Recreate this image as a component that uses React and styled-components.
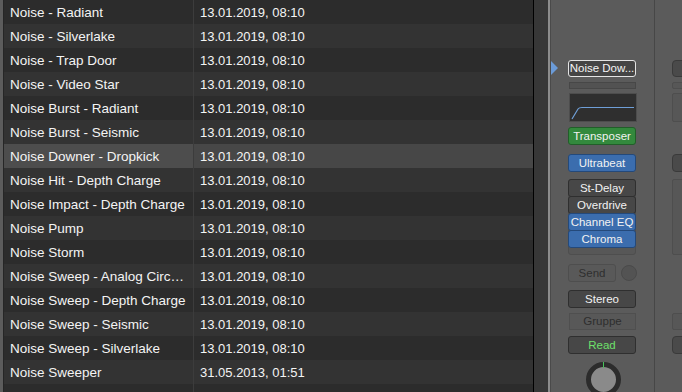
import React from "react";
import styled, { createGlobalStyle } from "styled-components";

const patches = [
  ["Noise - Radiant", "13.01.2019, 08:10"],
  ["Noise - Silverlake", "13.01.2019, 08:10"],
  ["Noise - Trap Door", "13.01.2019, 08:10"],
  ["Noise - Video Star", "13.01.2019, 08:10"],
  ["Noise Burst - Radiant", "13.01.2019, 08:10"],
  ["Noise Burst - Seismic", "13.01.2019, 08:10"],
  ["Noise Downer - Dropkick", "13.01.2019, 08:10"],
  ["Noise Hit - Depth Charge", "13.01.2019, 08:10"],
  ["Noise Impact - Depth Charge", "13.01.2019, 08:10"],
  ["Noise Pump", "13.01.2019, 08:10"],
  ["Noise Storm", "13.01.2019, 08:10"],
  ["Noise Sweep - Analog Circuits", "13.01.2019, 08:10"],
  ["Noise Sweep - Depth Charge", "13.01.2019, 08:10"],
  ["Noise Sweep - Seismic", "13.01.2019, 08:10"],
  ["Noise Sweep - Silverlake", "13.01.2019, 08:10"],
  ["Noise Sweeper", "31.05.2013, 01:51"],
  ["", ""],
];

const SELECTED = 6;

function PatchList() {
  return (
    <Style.List>
      {patches.map(([name, date], i) => (
        <Style.Row key={i} odd={i % 2 === 1} selected={i === SELECTED}>
          <Style.NameCell selected={i === SELECTED}>{name}</Style.NameCell>
          <Style.DateCell>{date}</Style.DateCell>
        </Style.Row>
      ))}
    </Style.List>
  );
}

function EqThumb() {
  return (
    <Style.EqBox>
      <svg width="66" height="27" viewBox="0 0 66 27">
        <path
          d="M2 25 L8 15 Q9 13.5 12 13.5 L64 13.5"
          fill="none"
          stroke="#6f9fd8"
          strokeWidth="1.2"
        />
      </svg>
    </Style.EqBox>
  );
}

function ChannelStrip() {
  return (
    <Style.Strip>
      <Style.SlotRow>
        <Style.Marker />
        <Style.NameButton>Noise Dow...</Style.NameButton>
      </Style.SlotRow>
      <Style.ThinBar />
      <EqThumb />
      <Style.PluginButton tone="green">Transposer</Style.PluginButton>
      <Style.PluginButton tone="blue" space={9}>
        Ultrabeat
      </Style.PluginButton>
      <Style.SlotGroup>
        <Style.PluginButton tone="dark">St-Delay</Style.PluginButton>
        <Style.PluginButton tone="dark">Overdrive</Style.PluginButton>
        <Style.PluginButton tone="blue">Channel EQ</Style.PluginButton>
        <Style.PluginButton tone="blue">Chroma</Style.PluginButton>
      </Style.SlotGroup>
      <Style.SendRow>
        <Style.SendButton>Send</Style.SendButton>
        <Style.SendKnob />
      </Style.SendRow>
      <Style.PluginButton tone="dark" space={8}>
        Stereo
      </Style.PluginButton>
      <Style.FlatButton>Gruppe</Style.FlatButton>
      <Style.PluginButton tone="dark" space={6} textColor="#6ee06b">
        Read
      </Style.PluginButton>
      <Style.Knob />
    </Style.Strip>
  );
}

function NextStrip() {
  return (
    <Style.NextStrip>
      <Style.Stub h={17} top={60} round />
      <Style.Stub h={7} top={5} />
      <Style.Stub h={29} top={4} />
      <Style.Stub h={18} top={32} round />
      <Style.Stub h={76} top={7} />
      <Style.Stub h={17} top={58} />
      <Style.Stub h={18} top={6} round />
    </Style.NextStrip>
  );
}

export default function App() {
  return (
    <>
      <GlobalStyle />
      <Style.Page>
        <Style.Edge />
        <PatchList />
        <Style.Gutter />
        <Style.Mixer>
          <ChannelStrip />
          <NextStrip />
        </Style.Mixer>
      </Style.Page>
    </>
  );
}

const GlobalStyle = createGlobalStyle`
  html, body {
    margin: 0;
    padding: 0;
    background: #2e2e2e;
    overflow: hidden;
  }
`;

const tones = {
  green: { bg: "#33893d", border: "#215e29", color: "#f2f2f2" },
  blue: { bg: "#3b6dae", border: "#24497a", color: "#f2f2f2" },
  dark: { bg: "#474747", border: "#2f2f2f", color: "#f2f2f2" },
};

const Style = {
  Page: styled.div`
    display: flex;
    width: 682px;
    height: 392px;
    overflow: hidden;
    font-family: "Liberation Sans", Arial, sans-serif;
  `,

  Edge: styled.div`
    width: 3px;
    flex: none;
    background: #5c5c5c;
    border-right: 1px solid #262626;
  `,

  List: styled.div`
    width: 529px;
    flex: none;
    display: flex;
    flex-direction: column;
    border-right: 1px solid #000;
  `,

  Row: styled.div`
    display: flex;
    height: 24px;
    flex: none;
    background: ${(p) =>
      p.selected ? "#474747" : p.odd ? "#333333" : "#2c2c2c"};
    color: #f4f4f4;
    line-height: 25px;
  `,

  NameCell: styled.div`
    width: 178px;
    flex: none;
    padding: 0 5px 0 6px;
    font-size: 13.5px;
    border-right: 1px solid #3c3c3c;
    background: ${(p) => (p.selected ? "#4d4d4d" : "transparent")};
    white-space: nowrap;
    overflow: hidden;
    text-overflow: ellipsis;
  `,

  DateCell: styled.div`
    flex: 1;
    padding-left: 6px;
    font-size: 13px;
    white-space: nowrap;
  `,

  Gutter: styled.div`
    width: 14px;
    flex: none;
    background: #373737;
    border-right: 2px solid #8c8c8c;
  `,

  Mixer: styled.div`
    flex: 1;
    display: flex;
    background: #5b5b5b;
    border-left: 1px solid #4a4a4a;
  `,

  Strip: styled.div`
    width: 86px;
    flex: none;
    display: flex;
    flex-direction: column;
    padding: 60px 0 0 17px;
    border-right: 1px solid #474747;

    & > * {
      flex-shrink: 0;
    }
  `,

  SlotRow: styled.div`
    position: relative;
  `,

  Marker: styled.div`
    position: absolute;
    left: -17px;
    top: 1px;
    width: 0;
    height: 0;
    border-top: 7px solid transparent;
    border-bottom: 7px solid transparent;
    border-left: 7px solid #6b9bd8;
  `,

  NameButton: styled.div`
    width: 66px;
    height: 15px;
    border: 1px solid #e4e4e4;
    border-radius: 3px;
    background: #454545;
    color: #f4f4f4;
    font-size: 11.5px;
    line-height: 15px;
    text-align: center;
    white-space: nowrap;
    overflow: hidden;
  `,

  ThinBar: styled.div`
    margin: 5px 0 0 1px;
    width: 65px;
    height: 5px;
    background: #525252;
    border: 1px solid #474747;
  `,

  EqBox: styled.div`
    margin: 4px 0 0 1px;
    width: 66px;
    height: 27px;
    background: #2f2f2f;
    border: 1px solid #4d4d4d;

    & svg {
      display: block;
    }
  `,

  PluginButton: styled.div`
    margin-top: ${(p) => (p.space != null ? p.space : 5)}px;
    width: 66px;
    height: 16px;
    flex: none;
    border: 1px solid ${(p) => tones[p.tone].border};
    border-radius: 3px;
    background: ${(p) => tones[p.tone].bg};
    color: ${(p) => p.textColor || tones[p.tone].color};
    font-size: 11.5px;
    line-height: 16px;
    text-align: center;
    white-space: nowrap;
  `,

  SlotGroup: styled.div`
    margin-top: 7px;
    width: 66px;
    height: 74px;
    border: 1px solid #4e4e4e;
    border-radius: 3px;
    background: #575757;

    & > div {
      margin: -1px 0 0 -1px;
      width: 66px;
    }
  `,

  SendRow: styled.div`
    display: flex;
    align-items: center;
    gap: 5px;
    margin-top: 9px;
  `,

  SendButton: styled.div`
    width: 46px;
    height: 16px;
    border: 1px solid #4e4e4e;
    border-radius: 3px;
    background: #595959;
    color: #2f2f2f;
    font-size: 11.5px;
    line-height: 16px;
    text-align: center;
  `,

  SendKnob: styled.div`
    width: 14px;
    height: 14px;
    border-radius: 50%;
    border: 1px solid #4a4a4a;
    background: #535353;
  `,

  FlatButton: styled.div`
    margin: 5px 0 0 1px;
    width: 65px;
    height: 15px;
    border: 1px solid #4f4f4f;
    background: #585858;
    color: #2e2e2e;
    font-size: 11.5px;
    line-height: 15px;
    text-align: center;
  `,

  Knob: styled.div`
    position: relative;
    margin: 8px 0 0 18px;
    width: 25px;
    height: 25px;
    border-radius: 50%;
    border: 5px solid #2c2c2c;
    background: #8a8a8a;

    &::after {
      content: "";
      position: absolute;
      left: 12px;
      top: -5px;
      width: 1px;
      height: 6px;
      background: #47c25a;
    }
  `,

  NextStrip: styled.div`
    flex: 1;
    display: flex;
    flex-direction: column;
    padding-left: 17px;
  `,

  Stub: styled.div`
    flex: none;
    margin-top: ${(p) => p.top}px;
    height: ${(p) => p.h}px;
    width: 40px;
    border: 1px solid ${(p) => (p.round ? "#3a3a3a" : "#4e4e4e")};
    border-radius: ${(p) => (p.round ? 4 : 2)}px;
    background: ${(p) => (p.round ? "#4a4a4a" : "#575757")};
    box-sizing: border-box;
  `,
};
